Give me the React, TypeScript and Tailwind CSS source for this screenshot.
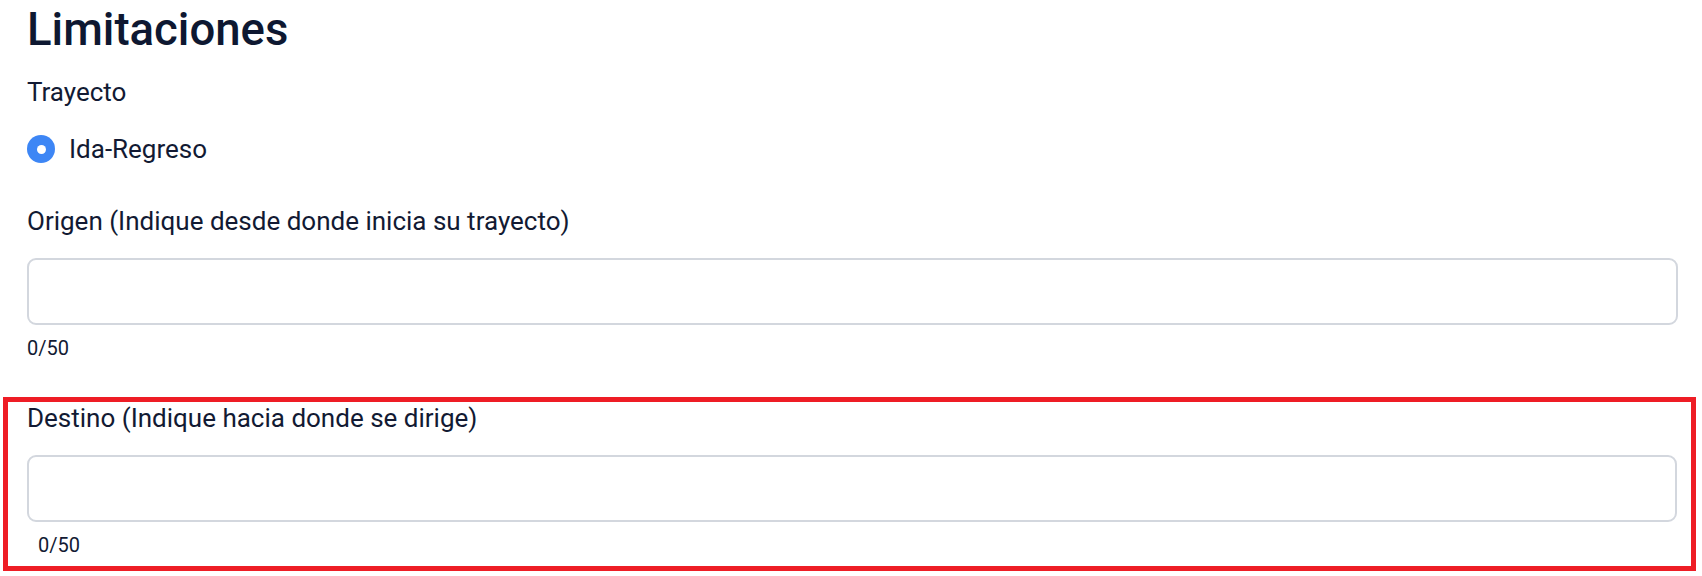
import React from "react";

function CharField({ label, counterIndent }: { label: string; counterIndent: string }) {
    return (
        <div className="flex flex-col">
            <label className="text-[26px] leading-[32px] text-[#121a33]">{label}</label>
            <input
                type="text"
                maxLength={50}
                className="mt-[21px] h-[67px] w-full rounded-[9px] border-2 border-[#d3d7de] bg-white px-4 text-[26px] outline-none"
            />
            <span className={`mt-[8px] text-[20px] leading-[30px] text-[#121a33] ${counterIndent}`}>0/50</span>
        </div>
    );
}

export default function App() {
    return (
        <div className="h-[576px] w-[1702px] overflow-hidden bg-white font-['Roboto',sans-serif] text-[#121a33]">
            <div className="pl-[27px] pr-[24px]">
                <h1 className="mt-[3px] text-[45.5px] font-medium leading-[54px] text-[#0e1831]">Limitaciones</h1>

                <p className="mt-[19px] text-[26px] leading-[32px]">Trayecto</p>

                <label className="mt-[25px] flex h-[32px] items-center gap-[14px]">
                    <span className="flex h-[28px] w-[28px] items-center justify-center rounded-full bg-[#3d86f5]">
                        <span className="h-[9px] w-[9px] rounded-full bg-white" />
                    </span>
                    <span className="text-[26px] leading-[32px]">Ida-Regreso</span>
                </label>

                <div className="mt-[40px]">
                    <CharField label="Origen (Indique desde donde inicia su trayecto)" counterIndent="" />
                </div>
            </div>

            <div className="ml-[3px] mr-[6px] mt-[34px] border-[5px] border-[#ee1d25] pb-[6px] pl-[19px] pr-[14px]">
                <CharField label="Destino (Indique hacia donde se dirige)" counterIndent="ml-[11px]" />
            </div>
        </div>
    );
}
